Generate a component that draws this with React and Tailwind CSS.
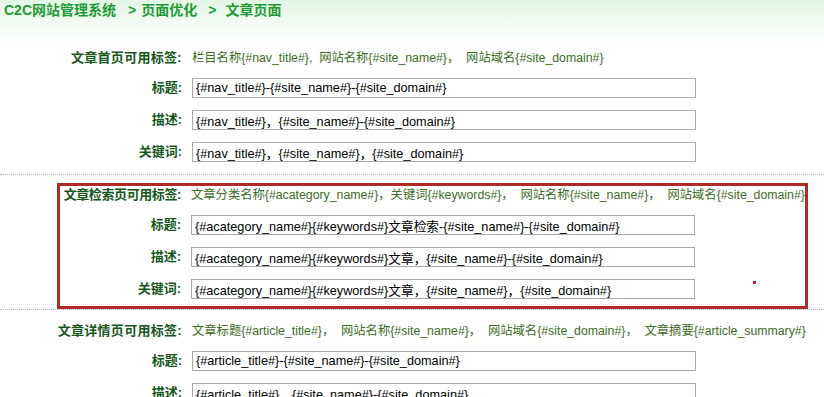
import React from "react";

const font = "font-['Liberation_Sans','Noto_Sans_CJK_SC',sans-serif]";

const Field = ({ label, value, labelW = "w-[182px]" }) => (
  <div className="flex items-center h-[32px]">
    <div className={`${labelW} shrink-0 text-right text-[13px] font-bold text-[#17561b] whitespace-nowrap`}>{label}</div>
    <input
      readOnly
      value={value}
      className={`ml-[10px] w-[504px] h-[20px] border border-[#a8a8a8] px-[3px] text-[12.7px] text-black outline-none ${font}`}
    />
  </div>
);

const TagRow = ({ label, tags, labelW = "w-[182px]", h = "h-[28px]", tight = false }) => (
  <div className={`flex items-center ${h}`}>
    <div className={`${labelW} shrink-0 flex justify-end text-[13px] font-bold text-[#17561b] whitespace-nowrap ${tight ? "tracking-[-0.4px]" : "tracking-[0.3px]"}`}>{label}</div>
    <div className="ml-[10px] text-[12.3px] text-[#3b6d25] whitespace-pre overflow-hidden">{tags}</div>
  </div>
);

export default function App() {
  return (
    <div className={`w-[824px] h-[397px] overflow-hidden bg-white ${font}`}>
      <div className="h-[44px] bg-gradient-to-b from-[#e3f6e6] to-white">
        <div className="pl-[4px] h-[21px] flex items-center text-[14px] font-bold text-[#1f9a34]">
          <span>C2C网站管理系统</span>
          <span className="ml-[12px]">&gt;</span>
          <span className="ml-[5px]">页面优化</span>
          <span className="ml-[11px]">&gt;</span>
          <span className="ml-[9px]">文章页面</span>
        </div>
      </div>

      <div className="border-b border-dotted border-[#b5b5b5] pb-[6px]">
        <TagRow
          label="文章首页可用标签:"
          tags={<>栏目名称{"{#nav_title#}"},  网站名称{"{#site_name#}"}，  网站域名{"{#site_domain#}"}</>}
        />
        <Field label="标题:" value="{#nav_title#}-{#site_name#}-{#site_domain#}" />
        <Field label="描述:" value="{#nav_title#}，{#site_name#}-{#site_domain#}" />
        <Field label="关键词:" value="{#nav_title#}，{#site_name#}，{#site_domain#}" />
      </div>

      <div className="border-b border-dotted border-[#b5b5b5] pt-[8px]">
        <div className="relative ml-[57px] w-[751px] border-[3px] border-[#b02a2a] pb-[1px]">
          <TagRow
            labelW="w-[121px]"
            h="h-[18px]"
            tight
            label="文章检索页可用标签:"
            tags={<>文章分类名称{"{#acategory_name#}"}，关键词{"{#keywords#}"}，  网站名称{"{#site_name#}"}，  网站域名{"{#site_domain#}"}</>}
          />
          <div className="mt-[5px]">
            <Field labelW="w-[121px]" label="标题:" value="{#acategory_name#}{#keywords#}文章检索-{#site_name#}-{#site_domain#}" />
            <Field labelW="w-[121px]" label="描述:" value="{#acategory_name#}{#keywords#}文章，{#site_name#}-{#site_domain#}" />
            <Field labelW="w-[121px]" label="关键词:" value="{#acategory_name#}{#keywords#}文章，{#site_name#}，{#site_domain#}" />
          </div>
          <span className="absolute left-[693px] top-[95px] w-[3px] h-[3px] bg-[#b8262a]" />
        </div>
      </div>

      <div className="pt-[7px]">
        <TagRow
          label="文章详情页可用标签:"
          tags={<>文章标题{"{#article_title#}"}，  网站名称{"{#site_name#}"}，  网站域名{"{#site_domain#}"}，  文章摘要{"{#article_summary#}"}</>}
        />
        <Field label="标题:" value="{#article_title#}-{#site_name#}-{#site_domain#}" />
        <Field label="描述:" value="{#article_title#}，{#site_name#}-{#site_domain#}" />
      </div>
    </div>
  );
}
